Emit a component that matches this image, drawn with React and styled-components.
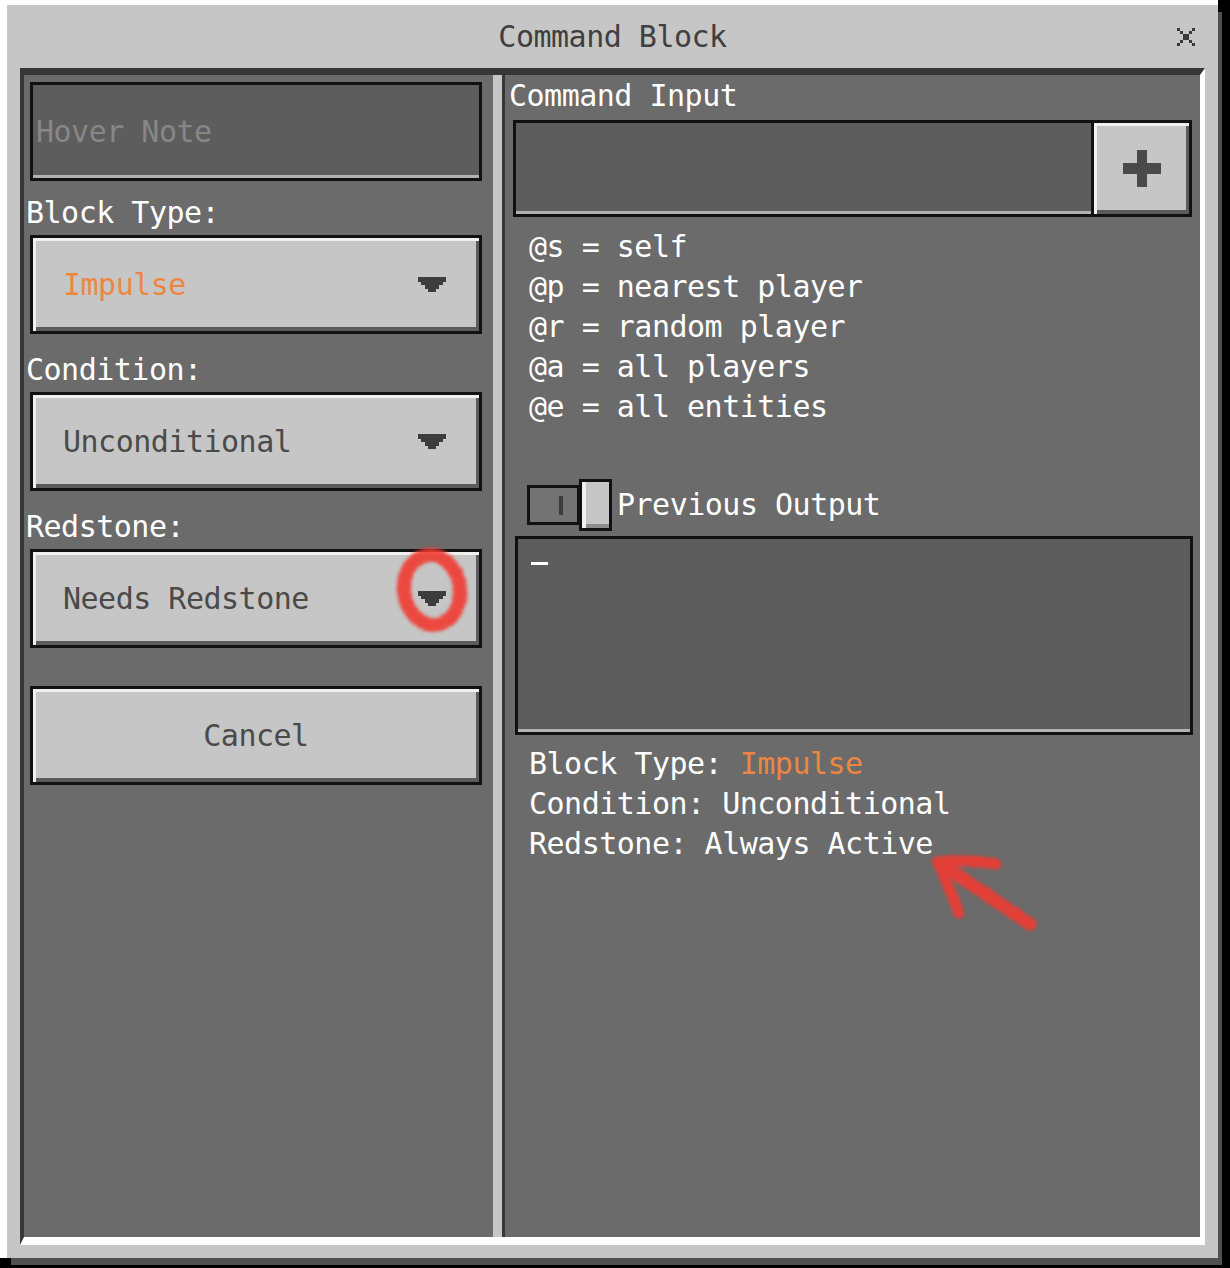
import React from "react";
import styled, { createGlobalStyle } from "styled-components";

const GlobalStyle = createGlobalStyle`
  html, body { margin: 0; padding: 0; background: #000; }
  body {
    font-family: "DejaVu Sans Mono", "Liberation Mono", monospace;
    font-size: 30px;
    letter-spacing: -0.5px;
  }
  * { box-sizing: border-box; }
`;

const Page = styled.div`
  position: relative;
  width: 1230px;
  height: 1268px;
  background: #000;
  overflow: hidden;
`;

const Frame = styled.div`
  width: 1218px;
  height: 1258px;
  background: #fff;
  padding: 5px 0 0 7px;
`;

const Dialog = styled.div`
  width: 1211px;
  height: 1253px;
  background: #c6c6c6;
  box-shadow: 4px 7px 0 #505050;
  display: flex;
  flex-direction: column;
  padding: 0 13px 13px 13px;
`;

const TitleBar = styled.div`
  height: 63px;
  display: grid;
  grid-template-columns: 1fr auto 1fr;
  align-items: center;
`;

const Title = styled.div`
  grid-column: 2;
  color: #3f3f3f;
  line-height: 36px;
`;

const Close = styled.div`
  grid-column: 3;
  justify-self: end;
  margin-right: 10px;
  display: flex;
`;

const Panel = styled.div`
  flex: 1;
  display: flex;
  background: #6b6b6b;
  border-style: solid;
  border-width: 7px 5px 8px 4px;
  border-color: #373737 #ffffff #ffffff #373737;
`;

const LeftCol = styled.div`
  width: 469px;
  padding: 7px 11px 0 6px;
  display: flex;
  flex-direction: column;
`;

const Divider = styled.div`
  width: 12px;
  border-left: 9px solid #c6c6c6;
  background: #373737;
`;

const RightCol = styled.div`
  flex: 1;
  padding: 3px 8px 0 8px;
  display: flex;
  flex-direction: column;
`;

const DarkField = styled.div`
  border: 3px solid #111;
  background: #5d5d5d;
  box-shadow: inset 0 -3px 0 #b2b2b2;
`;

const HoverField = styled(DarkField)`
  height: 99px;
  display: flex;
  align-items: center;
  padding-left: 3px;
  color: #878787;
`;

const FieldLabel = styled.div`
  height: 36px;
  line-height: 36px;
  margin: ${(p) => (p.$first ? 14 : 18)}px 0 4px -4px;
  color: #fff;
`;

const LightButton = styled.div`
  height: 99px;
  border: 3px solid #111;
  background: #c6c6c6;
  box-shadow: inset 3px 3px 0 #f0f0f0, inset -3px -4px 0 #5b5b5b;
  display: flex;
  align-items: center;
  color: #4a4a4a;
`;

const Dropdown = styled(LightButton)`
  justify-content: space-between;
  padding: 0 33px 0 30px;
  color: ${(p) => (p.$accent ? "#ec8743" : "#4a4a4a")};
`;

const CancelButton = styled(LightButton)`
  margin-top: 38px;
  justify-content: center;
`;

const ColLabel = styled.div`
  height: 36px;
  line-height: 36px;
  margin-left: -4px;
  color: #fff;
`;

const InputRow = styled.div`
  margin-top: 6px;
  height: 97px;
  display: flex;
`;

const CommandField = styled(DarkField)`
  flex: 1;
  border-right: none;
`;

const PlusButton = styled(LightButton)`
  width: 101px;
  height: 97px;
  justify-content: center;
`;

const TextList = styled.div`
  margin-top: ${(p) => p.$top}px;
  padding-left: 16px;
  color: #fff;
  line-height: 40px;
`;

const Line = styled.div`
  height: 40px;
  white-space: pre;
`;

const Accent = styled.span`
  color: #ec8743;
`;

const ToggleRow = styled.div`
  margin-top: 52px;
  padding-left: 14px;
  display: flex;
  align-items: center;
`;

const Track = styled.div`
  width: 53px;
  height: 40px;
  border: 3px solid #111;
  background: #737373;
  display: flex;
  align-items: center;
  justify-content: flex-end;
  padding-right: 14px;
`;

const Tick = styled.div`
  width: 4px;
  height: 19px;
  background: #3c3c3c;
`;

const Knob = styled.div`
  width: 33px;
  height: 52px;
  margin-left: -1px;
  border: 3px solid #111;
  background: #c6c6c6;
  box-shadow: inset 4px 0 0 #f0f0f0, inset 0 -4px 0 #8c8c8c;
`;

const ToggleText = styled.div`
  margin-left: 5px;
  color: #fff;
  line-height: 36px;
`;

const OutputBox = styled(DarkField)`
  margin: 5px -1px 0 2px;
  height: 199px;
`;

const Caret = styled.div`
  width: 17px;
  height: 3px;
  background: #fff;
  margin: 23px 0 0 13px;
`;

const Overlay = styled.svg`
  position: absolute;
  left: 0;
  top: 0;
  pointer-events: none;
`;

const ArrowDown = () => (
  <svg width="28" height="15" viewBox="0 0 28 15" shapeRendering="crispEdges">
    <g fill="#3d3d3d">
      <rect x="0" y="0" width="28" height="5" />
      <rect x="3" y="5" width="22" height="3" />
      <rect x="7" y="8" width="14" height="4" />
      <rect x="10" y="12" width="8" height="3" />
    </g>
  </svg>
);

const CloseIcon = () => {
  const cells = [0, 1, 2, 3, 4, 5];
  return (
    <svg width="18" height="18" viewBox="0 0 18 18" shapeRendering="crispEdges">
      <g fill="#3a3a3a">
        {cells.map((i) => (
          <rect key={"a" + i} x={i * 3} y={i * 3} width="3" height="3" />
        ))}
        {cells.map((i) => (
          <rect key={"b" + i} x={15 - i * 3} y={i * 3} width="3" height="3" />
        ))}
      </g>
    </svg>
  );
};

const PlusIcon = () => (
  <svg width="38" height="37" viewBox="0 0 38 37" shapeRendering="crispEdges">
    <g fill="#4a4a4a">
      <rect x="0" y="13" width="38" height="11" />
      <rect x="14" y="0" width="10" height="37" />
    </g>
  </svg>
);

const selectors = [
  "@s = self",
  "@p = nearest player",
  "@r = random player",
  "@a = all players",
  "@e = all entities",
];

export default function App() {
  return (
    <>
      <GlobalStyle />
      <Page>
        <Frame>
          <Dialog>
            <TitleBar>
              <Title>Command Block</Title>
              <Close>
                <CloseIcon />
              </Close>
            </TitleBar>
            <Panel>
              <LeftCol>
                <HoverField>Hover Note</HoverField>
                <FieldLabel $first>Block Type:</FieldLabel>
                <Dropdown $accent>
                  <span>Impulse</span>
                  <ArrowDown />
                </Dropdown>
                <FieldLabel>Condition:</FieldLabel>
                <Dropdown>
                  <span>Unconditional</span>
                  <ArrowDown />
                </Dropdown>
                <FieldLabel>Redstone:</FieldLabel>
                <Dropdown>
                  <span>Needs Redstone</span>
                  <ArrowDown />
                </Dropdown>
                <CancelButton>Cancel</CancelButton>
              </LeftCol>
              <Divider />
              <RightCol>
                <ColLabel>Command Input</ColLabel>
                <InputRow>
                  <CommandField />
                  <PlusButton>
                    <PlusIcon />
                  </PlusButton>
                </InputRow>
                <TextList $top={10}>
                  {selectors.map((s) => (
                    <Line key={s}>{s}</Line>
                  ))}
                </TextList>
                <ToggleRow>
                  <Track>
                    <Tick />
                  </Track>
                  <Knob />
                  <ToggleText>Previous Output</ToggleText>
                </ToggleRow>
                <OutputBox>
                  <Caret />
                </OutputBox>
                <TextList $top={9}>
                  <Line>
                    Block Type: <Accent>Impulse</Accent>
                  </Line>
                  <Line>Condition: Unconditional</Line>
                  <Line>Redstone: Always Active</Line>
                </TextList>
              </RightCol>
            </Panel>
          </Dialog>
        </Frame>
        <Overlay width="1230" height="1268" viewBox="0 0 1230 1268">
          <defs>
            <filter id="spray" x="-20%" y="-20%" width="140%" height="140%">
              <feTurbulence type="fractalNoise" baseFrequency="0.8" numOctaves="2" seed="3" result="noise" />
              <feDisplacementMap in="SourceGraphic" in2="noise" scale="6" xChannelSelector="R" yChannelSelector="G" result="disp" />
              <feGaussianBlur in="disp" stdDeviation="1.6" />
            </filter>
          </defs>
          <g
            fill="none"
            stroke="#f03a31"
            strokeLinecap="round"
            opacity="0.9"
            filter="url(#spray)"
          >
            <ellipse cx="432" cy="590" rx="28" ry="35" strokeWidth="14" transform="rotate(-8 432 590)" />
            <path d="M1030 924 L944 866" strokeWidth="13" />
            <path d="M937 862 Q965 859 996 864" strokeWidth="11" />
            <path d="M939 864 Q950 890 959 913" strokeWidth="11" />
          </g>
        </Overlay>
      </Page>
    </>
  );
}
